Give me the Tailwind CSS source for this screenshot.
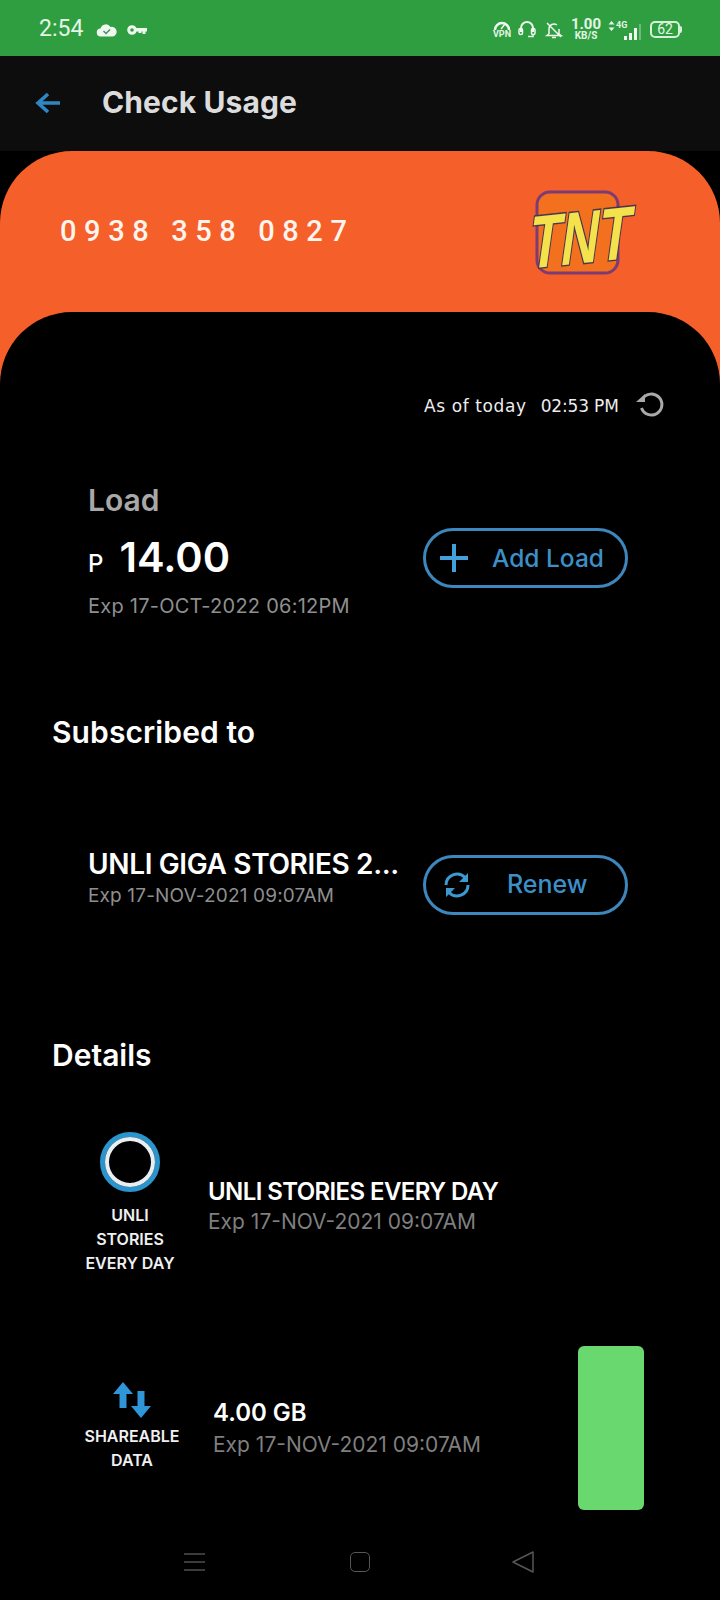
<!DOCTYPE html>
<html lang="en">
  <head>
    <meta charset="UTF-8" />
    <meta name="viewport" content="width=device-width, initial-scale=1.0" />
    <title>Check Usage</title>
    <script src="https://cdn.jsdelivr.net/npm/@tailwindcss/browser@4"></script>
  </head>
  <body class="bg-black">
    <div class="relative w-[720px] h-[1600px] overflow-hidden bg-black font-['Inter',sans-serif]">
      <!-- Status bar -->
      <div class="h-[56px] bg-[#2f9e41] flex items-center justify-between pt-[3px] pl-[39px] pr-[38px] text-[#e4f5e6]">
        <div class="flex items-center">
          <span class="text-[23px] font-['Roboto',sans-serif]">2:54</span>
          <svg class="ml-[13px]" width="22" height="16" viewBox="0 0 22 16"><path d="M5 14.500a4 4 0 0 1-.5-8 5.500 5.500 0 0 1 10-1.500 4.500 4.500 0 0 1 2.500 9.500z" fill="#eef8ef"/><path d="M7.500 9l2.500 2.500 4-4" fill="none" stroke="#4a8f5a" stroke-width="1.500"/></svg>
          <svg class="ml-[9px]" width="20" height="12" viewBox="0 0 20 12"><circle cx="5" cy="6" r="3.300" fill="none" stroke="#eef8ef" stroke-width="3"/><path d="M8 4h12v3.500h-1.500v2.500h-3v-2.500h-1v1.500h-3v-1.500h-3.500z" fill="#eef8ef"/></svg>
        </div>
        <div class="flex items-center">
          <div class="w-[20px] flex flex-col items-center">
            <svg width="18" height="9" viewBox="0 0 18 9"><path d="M2 9a7 7 0 0 1 14 0" fill="none" stroke="#eef8ef" stroke-width="2.500"/><path d="M8 8l4-5" stroke="#eef8ef" stroke-width="1.500"/></svg>
            <span class="text-[9px] leading-[9px] font-bold font-['Roboto',sans-serif]">VPN</span>
          </div>
          <svg class="ml-[6px]" width="18" height="19" viewBox="0 0 18 19"><path d="M3 12V8a6 6 0 0 1 12 0v4" fill="none" stroke="#eef8ef" stroke-width="2"/><rect x="1" y="8.500" width="3.500" height="6" rx="1.500" fill="none" stroke="#eef8ef" stroke-width="1.500"/><rect x="13.500" y="8.500" width="3.500" height="6" rx="1.500" fill="none" stroke="#eef8ef" stroke-width="1.500"/><path d="M15 14.500v2h-5" fill="none" stroke="#eef8ef" stroke-width="1.500"/></svg>
          <svg class="ml-[9px]" width="18" height="18" viewBox="0 0 18 18"><path d="M4 13V8a5 5 0 0 1 8-4M14 8v5l2 1.500H2L4 13M7 16.500h4M2 2l14 14" fill="none" stroke="#eef8ef" stroke-width="1.500"/></svg>
          <div class="ml-[7px] w-[32px] text-center font-bold font-['Roboto',sans-serif]">
            <div class="text-[15px] leading-[12px]">1.00</div>
            <div class="text-[10px] leading-[11px]">KB/S</div>
          </div>
          <div class="ml-[6px] relative w-[33px] h-[20px]">
            <span class="absolute left-[8px] top-0 text-[9px] leading-[11px] font-bold font-['Roboto',sans-serif]">4G</span>
            <svg class="absolute left-0 top-[1px]" width="7" height="10" viewBox="0 0 7 10"><path d="M3.500 0L6.500 3.500H.5zM3.500 10L.5 6.500h6z" fill="#e4f5e6"/></svg>
            <div class="absolute right-0 bottom-0 flex items-end gap-[2px]">
              <i class="block w-[3px] h-[4px] bg-[#eef8ef]"></i>
              <i class="block w-[3px] h-[7px] bg-[#eef8ef]"></i>
              <i class="block w-[3px] h-[12px] bg-[#eef8ef]"></i>
              <i class="block w-[2px] h-[16px] bg-[#6fb97c]"></i>
            </div>
          </div>
          <div class="ml-[9px] w-[30px] h-[17px] border-2 border-[#d5efd8] rounded-[5px] flex items-center justify-center text-[14px] font-['Roboto',sans-serif]">62</div>
          <i class="block w-[2px] h-[7px] bg-[#d5efd8] rounded-r"></i>
        </div>
      </div>

      <!-- App bar -->
      <div class="h-[95px] bg-[#0d0d0d] flex items-center pl-[35px] pb-[2px]">
        <svg width="26" height="24" viewBox="0 0 26 24"><path d="M13 3L3 12l10 9M3 12h22" fill="none" stroke="#2f86c4" stroke-width="3.600"/></svg>
        <h1 class="ml-[41px] text-[30px] font-bold text-[#dcdcdc] tracking-[0.1px]">Check Usage</h1>
      </div>

      <!-- Number card -->
      <div class="h-[240px] bg-[#f55f2a] rounded-t-[72px] flex pl-[60px] pr-[78px] pt-[58px] justify-between items-start">
        <span class="text-[29px] leading-[44px] font-medium text-[#fff4ee] tracking-[7.600px] font-['Roboto',sans-serif]">0938 358 0827</span>
        <svg class="-mt-[20px] overflow-visible" width="114" height="88" viewBox="0 0 114 88">
          <rect x="9" y="3" width="81" height="81" rx="13" fill="#f3701f" stroke="#7c3b72" stroke-width="3"/>
          <g transform="rotate(-6 52 44)">
            <text x="14" y="74" transform="skewX(-14)" font-family="Liberation Sans" font-weight="700" font-size="74" textLength="102" lengthAdjust="spacingAndGlyphs" fill="#f4e24c" stroke="#4c3550" stroke-width="3" paint-order="stroke">TNT</text>
          </g>
        </svg>
      </div>

      <!-- Content panel -->
      <div class="absolute left-0 top-[312px] w-[720px] h-[1288px] bg-black rounded-t-[72px]">
        <div class="h-[171px] pt-[77px] pl-[424px] flex items-start">
          <span class="text-[17px] leading-[34px] text-[#ededed] font-['DejaVu_Sans',sans-serif] whitespace-nowrap tracking-[0.6px]">As of today</span>
          <span class="ml-[14px] text-[17px] leading-[34px] text-[#ededed] font-['DejaVu_Sans',sans-serif] whitespace-nowrap tracking-[-0.15px]">02:53 PM</span>
          <svg class="ml-[15px] mt-[2px]" width="30" height="28" viewBox="0 0 30 28"><path d="M8.500 8a10.500 10.500 0 1 1-1 9" fill="none" stroke="#a9a9a9" stroke-width="3"/><path d="M2 11h9V3z" fill="#a9a9a9"/></svg>
        </div>

        <!-- Load -->
        <div class="flex items-start pl-[88px] pr-[92px]">
          <div class="w-[335px]">
            <div class="text-[30px] leading-[34px] font-semibold text-[#a8a8a8]">Load</div>
            <div class="mt-[13px] flex items-baseline text-white">
              <span class="text-[24px] font-medium">P</span>
              <span class="ml-[16px] text-[41.500px] leading-[54px] font-semibold">14.00</span>
            </div>
            <div class="mt-[9px] text-[20px] leading-[26px] text-[#8f8f8f] tracking-[0.25px]">Exp 17-OCT-2022 06:12PM</div>
          </div>
          <div class="mt-[45px] w-[205px] h-[60px] rounded-full border-[3px] border-[#3d87bd] flex items-center text-[#3d8fc8] pl-[12px]">
            <svg width="32" height="32" viewBox="0 0 32 32"><path d="M16 2v28M2 16h28" stroke="#43a0d8" stroke-width="4"/></svg>
            <span class="ml-[22px] text-[24.500px] font-medium">Add Load</span>
          </div>
        </div>

        <h2 class="mt-[95px] pl-[52px] text-[30px] leading-[36px] font-semibold text-white tracking-[0.1px]">Subscribed to</h2>

        <!-- Subscription -->
        <div class="mt-[96px] flex items-start pl-[88px] pr-[92px]">
          <div class="w-[335px]">
            <div class="text-[28px] leading-[36px] font-semibold text-white whitespace-nowrap tracking-[-0.35px]">UNLI GIGA STORIES 2...</div>
            <div class="mt-[1px] text-[19px] leading-[26px] text-[#8f8f8f] tracking-[0.15px]">Exp 17-NOV-2021 09:07AM</div>
          </div>
          <div class="mt-[9px] w-[205px] h-[60px] rounded-full border-[3px] border-[#3d87bd] flex items-center text-[#3d8fc8] pl-[15px]">
            <svg width="32" height="32" viewBox="0 0 32 32"><path d="M5 16a11 11 0 0 1 19-7.500M27 16a11 11 0 0 1-19 7.500" fill="none" stroke="#3c9ad2" stroke-width="3"/><path d="M27 4v9h-9zM5 28v-9h9z" fill="#3c9ad2"/></svg>
            <span class="ml-[34px] text-[25px] font-medium">Renew</span>
          </div>
        </div>

        <h2 class="mt-[122px] pl-[52px] text-[30px] leading-[36px] font-semibold text-white">Details</h2>

        <!-- Unli stories -->
        <div class="mt-[59px] flex items-start">
          <div class="ml-[70px] w-[120px] flex flex-col items-center">
            <div class="w-[60px] h-[60px] rounded-full border-[5px] border-[#2a94cc] flex items-center justify-center">
              <div class="w-[50px] h-[50px] rounded-full border-[4px] border-[#e8eef2]"></div>
            </div>
            <div class="mt-[11px] text-[16px] leading-[24px] font-semibold text-[#f0f0f0] text-center">UNLI<br />STORIES<br />EVERY DAY</div>
          </div>
          <div class="ml-[18px] mt-[44px]">
            <div class="text-[24px] leading-[32px] font-semibold text-white tracking-[-0.6px]">UNLI STORIES EVERY DAY</div>
            <div class="text-[21px] leading-[28px] text-[#7f7f7f]">Exp 17-NOV-2021 09:07AM</div>
          </div>
        </div>

        <!-- Shareable data -->
        <div class="mt-[107px] flex items-start">
          <div class="ml-[72px] w-[120px] flex flex-col items-center">
            <svg width="38" height="36" viewBox="0 0 38 36"><path d="M10 0L0 12h6.500v14h7V12H20zM28 36L18 24h6.500V9h7v15H38z" fill="#2f96d8"/></svg>
            <div class="mt-[6px] text-[16px] leading-[24px] font-semibold text-[#f0f0f0] text-center">SHAREABLE<br />DATA</div>
          </div>
          <div class="ml-[21px] mt-[15px]">
            <div class="text-[24px] leading-[32px] font-semibold text-white">4.00 GB</div>
            <div class="mt-[2px] text-[21px] leading-[28px] text-[#7f7f7f]">Exp 17-NOV-2021 09:07AM</div>
          </div>
        </div>
      </div>

      <!-- Floating green block -->
      <div class="absolute left-[578px] top-[1346px] w-[66px] h-[164px] bg-[#69d86f] rounded-[6px]"></div>

      <!-- Nav buttons -->
      <div class="absolute left-0 bottom-[26px] w-[720px] h-[24px] flex items-center">
        <svg class="ml-[184px]" width="21" height="20" viewBox="0 0 21 20"><path d="M0 2h21M0 10h21M0 18h21" stroke="#4f4f4f" stroke-width="1.500"/></svg>
        <div class="ml-[145px] w-[20px] h-[20px] border-[1.500px] border-[#565656] rounded-[5px]"></div>
        <svg class="ml-[141px]" width="24" height="24" viewBox="0 0 24 24"><path d="M22 2v20L2 12z" fill="none" stroke="#565656" stroke-width="1.500" stroke-linejoin="round"/></svg>
      </div>
    </div>
  </body>
</html>
